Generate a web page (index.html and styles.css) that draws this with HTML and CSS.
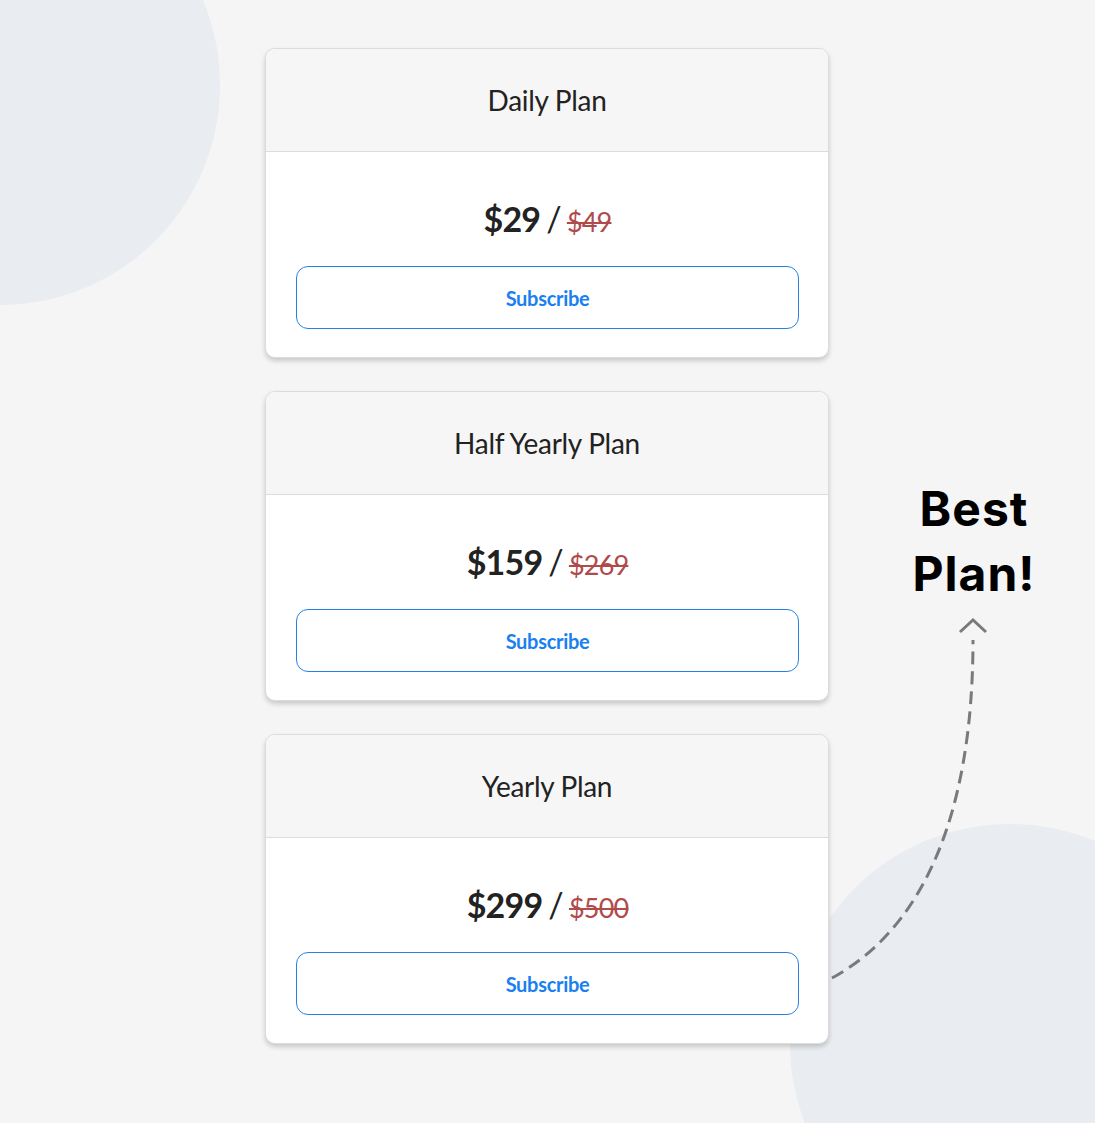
FILE: index.html
```html
<!DOCTYPE html>
<html lang="en">
<head>
    <meta charset="UTF-8">
    <meta name="viewport" content="width=device-width, initial-scale=1.0">
    <title>Plans</title>
    <link rel="stylesheet" href="styles.css">
</head>
<body>
    <div class="page">
        <div class="blob blob-top"></div>
        <div class="blob blob-bottom"></div>

        <div class="plans">
            <div class="card">
                <div class="card-header">Daily Plan</div>
                <div class="card-body">
                    <div class="price"><b>$29</b> / <s>$49</s></div>
                    <button class="subscribe">Subscribe</button>
                </div>
            </div>

            <div class="card">
                <div class="card-header">Half Yearly Plan</div>
                <div class="card-body">
                    <div class="price"><b>$159</b> / <s>$269</s></div>
                    <button class="subscribe">Subscribe</button>
                </div>
            </div>

            <div class="card">
                <div class="card-header">Yearly Plan</div>
                <div class="card-body">
                    <div class="price"><b>$299</b> / <s>$500</s></div>
                    <button class="subscribe">Subscribe</button>
                </div>
            </div>
        </div>

        <div class="note">Best<br>Plan!</div>

        <svg class="arrow" width="200" height="400" viewBox="0 0 200 400">
            <!-- curve runs from the yearly card up to the label -->
            <path d="M12 378 C 100 330, 153 220, 153 40" fill="none" stroke="#7a7a7a" stroke-width="3" stroke-dasharray="13 7"/>
            <path d="M140 32 L153 20 L166 32" fill="none" stroke="#7a7a7a" stroke-width="3"/>
        </svg>
    </div>
</body>
</html>
```

FILE: styles.css
```css
body {
    margin: 0;
    background-color: #f5f5f5;
    font-family: Lato, "Open Sans", sans-serif;
}
.page {
    position: relative;
    height: 1123px;
    overflow: hidden;
}
.blob {
    position: absolute;
    width: 440px;
    height: 440px;
    border-radius: 50%;
    background-color: #e9ecf0;
}
.blob-top {
    left: -220px;
    top: -135px;
}
.blob-bottom {
    left: 790px;
    top: 824px;
}
.plans {
    position: relative;
    width: 564px;
    margin-left: 265px;
    padding-top: 48px;
    display: flex;
    flex-direction: column;
    gap: 33px;
}
.card {
    background-color: white;
    border: 1px solid #dcdcdc;
    border-radius: 10px;
    box-shadow: 0 3px 5px rgba(0,0,0,0.18);
    overflow: hidden;
}
.card-header {
    height: 102px;
    background-color: #f6f6f6;
    border-bottom: 1px solid #dcdcdc;
    display: flex;
    align-items: center;
    justify-content: center;
    font-size: 28px;
    letter-spacing: -0.3px;
    color: #222;
}
.card-body {
    padding: 40px 29px 28px 30px;
    display: flex;
    flex-direction: column;
    align-items: stretch;
    gap: 22px;
}
.price {
    height: 52px;
    display: flex;
    align-items: center;
    justify-content: center;
    gap: 6px;
    font-size: 34px;
    letter-spacing: -0.8px;
    color: #222;
}
.price b {
    font-weight: 700;
}
.price s {
    font-size: 27px;
    color: #b04b4b;
    margin-top: 6px;
}
.subscribe {
    height: 63px;
    background-color: white;
    border: 1.5px solid #2680e6;
    border-radius: 12px;
    color: #1a7ff0;
    font-family: Lato, sans-serif;
    font-size: 20px;
    font-weight: 700;
    letter-spacing: -0.3px;
    cursor: pointer;
}
.note {
    position: absolute;
    left: 874px;
    top: 476px;
    width: 200px;
    text-align: center;
    font-family: Inter, "Liberation Sans", sans-serif;
    font-weight: 700;
    font-size: 48px;
    letter-spacing: 1px;
    line-height: 65px;
    color: #000;
}
.arrow {
    position: absolute;
    left: 820px;
    top: 600px;
}
```
